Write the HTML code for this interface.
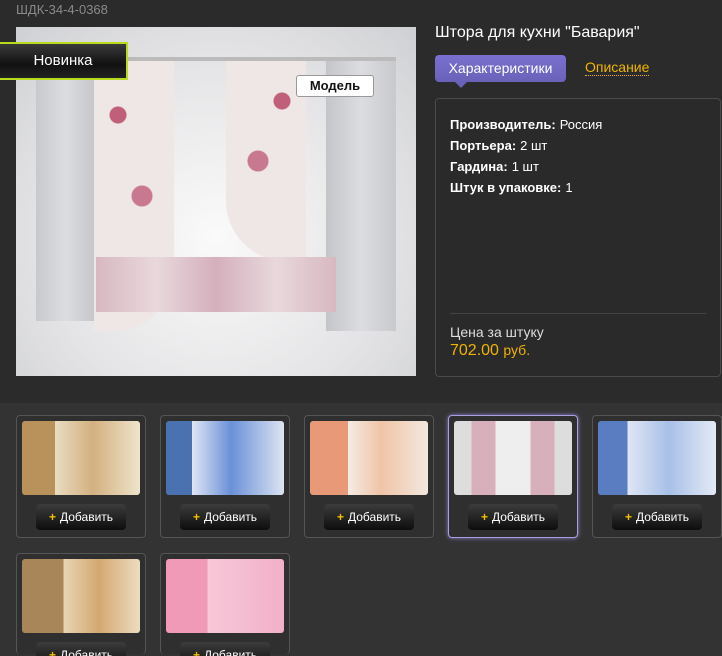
<!DOCTYPE html>
<html style="overflow:hidden;height:656px"><head><meta charset="utf-8"><style>
html,body{overflow:hidden}
body{margin:0;width:722px;height:656px;background:#2b2b2b;font-family:"Liberation Sans",Arial,sans-serif;position:relative}
.a{position:absolute}
.sku{left:16px;top:2px;color:#8a8a8a;font-size:13px}
.main{left:16px;top:27px;width:400px;height:349px;background:radial-gradient(ellipse at 50% 60%,#fafafa 0%,#e4e4e6 60%,#cfd0d3 100%);overflow:hidden}
.nov{left:0;top:42px;width:126px;height:34px;background:linear-gradient(#3a3a3a,#111 60%,#222);border:2px solid #b8dc1c;border-left:none;color:#fff;font-size:15px;line-height:34px;text-align:center}
.model{left:296px;top:75px;width:76px;height:20px;background:#fff;border:1px solid #999;border-radius:3px;font-weight:bold;font-size:13px;text-align:center;line-height:20px;color:#111}
.title{left:435px;top:24px;color:#fff;font-size:16px}
.tab{left:435px;top:55px;width:131px;height:27px;background:linear-gradient(#7a70d0,#6a62b8);border-radius:4px;color:#fff;font-size:14px;line-height:27px;text-align:center}
.tab:after{content:"";position:absolute;left:20px;bottom:-6px;border:6px solid transparent;border-top-color:#6a62b8;border-bottom:0}
.desc{left:585px;top:60px;color:#f0b400;font-size:14px;border-bottom:1px dotted #f0b400;line-height:15px}
.box{left:435px;top:98px;width:284px;height:277px;border:1px solid #4a4a4a;border-radius:4px;background:#2a2a2a}
.ch{left:450px;top:114px;color:#fff;font-size:13px;line-height:21px}
.ch b{margin-right:4px}
.line{left:450px;top:313px;width:256px;height:1px;background:#444}
.pl{left:450px;top:324px;color:#ddd;font-size:14px}
.pr{left:450px;top:342px;color:#f0b400;font-size:16px}
.pr span{font-size:14px}
.bot{left:0;top:403px;width:722px;height:253px;background:#333}
.card{width:128px;height:121px;border:1px solid #555;border-radius:4px;background:#2f2f2f}
.card .im{position:absolute;left:5px;top:5px;width:118px;height:74px;border-radius:3px}
.card .btn{position:absolute;left:19px;top:88px;width:90px;height:26px;border-radius:4px;background:linear-gradient(#3c3c3c,#0d0d0d);color:#fff;font-size:12px;line-height:26px;text-align:center}
.btn i{color:#f0c000;font-style:normal;font-weight:bold;margin-right:4px}
</style></head><body>
<div class="a sku">ШДК-34-4-0368</div>
<div class="a main">
<div class="a" style="left:20px;top:30px;width:360px;height:4px;background:#bbb"></div>
<div class="a" style="left:20px;top:34px;width:60px;height:260px;background:linear-gradient(90deg,#c8c9cd,#dcdde0,#c4c5c9)"></div>
<div class="a" style="left:310px;top:34px;width:70px;height:270px;background:linear-gradient(90deg,#c4c5c9,#dcdde0,#c8c9cd)"></div>
<div class="a" style="left:78px;top:34px;width:80px;height:270px;background:radial-gradient(circle at 30% 20%,#c06078 0 8px,transparent 9px),radial-gradient(circle at 60% 50%,#c87890 0 10px,transparent 11px),radial-gradient(circle at 40% 80%,#b85870 0 9px,transparent 10px),#efe6e6;border-radius:0 0 60px 0"></div>
<div class="a" style="left:210px;top:34px;width:80px;height:200px;background:radial-gradient(circle at 70% 20%,#c06078 0 8px,transparent 9px),radial-gradient(circle at 40% 50%,#c87890 0 10px,transparent 11px),#efe6e6;border-radius:0 0 0 60px"></div>
<div class="a" style="left:80px;top:230px;width:240px;height:55px;background:linear-gradient(90deg,#d8b8c0,#e8d8dc,#d4b0bc,#e8d8dc,#d8b8c0)"></div>
</div>
<div class="a nov">Новинка</div>
<div class="a model">Модель</div>
<div class="a title">Штора для кухни "Бавария"</div>
<div class="a tab">Характеристики</div>
<div class="a desc">Описание</div>
<div class="a box"></div>
<div class="a ch"><b>Производитель:</b>Россия<br><b>Портьера:</b>2 шт<br><b>Гардина:</b>1 шт<br><b>Штук в упаковке:</b>1</div>
<div class="a line"></div>
<div class="a pl">Цена за штуку</div>
<div class="a pr">702.00 <span>руб.</span></div>
<div class="a bot"></div>
<div class="a card" style="left:16px;top:415px"><div class="im" style="background:linear-gradient(90deg,#b8925a 0 28%,#e8dcc0 28%,#d4b080 60%,#eee4cc)"></div><div class="btn"><i>+</i>Добавить</div></div>
<div class="a card" style="left:160px;top:415px"><div class="im" style="background:linear-gradient(90deg,#4a72b0 0 22%,#e0e6f2 22%,#6a90d8 55%,#dce4f2)"></div><div class="btn"><i>+</i>Добавить</div></div>
<div class="a card" style="left:304px;top:415px"><div class="im" style="background:linear-gradient(90deg,#e89a78 0 32%,#f4ece4 32%,#f0c4a8 60%,#f2e8de)"></div><div class="btn"><i>+</i>Добавить</div></div>
<div class="a card" style="left:448px;top:415px;border-color:#a8a0e0;box-shadow:0 0 4px #8a80d0"><div class="im" style="background:linear-gradient(90deg,#ddd 0 15%,#d8b0bc 15% 35%,#eee 35% 65%,#d8b0bc 65% 85%,#ddd 85%)"></div><div class="btn"><i>+</i>Добавить</div></div>
<div class="a card" style="left:592px;top:415px"><div class="im" style="background:linear-gradient(90deg,#5a7cc0 0 25%,#dfe6f4 25%,#a8c0e8 60%,#e4eaf6)"></div><div class="btn"><i>+</i>Добавить</div></div>
<div class="a card" style="left:16px;top:553px;height:100px;border-bottom:none"><div class="im" style="background:linear-gradient(90deg,#a8865a 0 35%,#e8d6b4 35%,#d4a870 65%,#ecdcc0)"></div><div class="btn"><i>+</i>Добавить</div></div>
<div class="a card" style="left:160px;top:553px;height:100px;border-bottom:none"><div class="im" style="background:linear-gradient(90deg,#f09ab8 0 35%,#f6c8d8 35%,#f2b0c8)"></div><div class="btn"><i>+</i>Добавить</div></div>
</body></html>
